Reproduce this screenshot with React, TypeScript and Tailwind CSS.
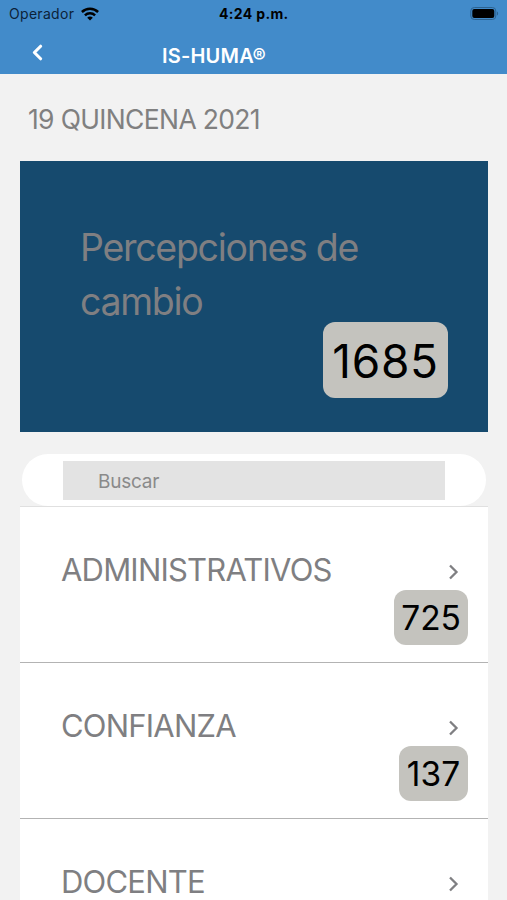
import { ChevronLeft } from "lucide-react";

type Group = { name: string; total?: number };

const groups: Group[] = [
  { name: "ADMINISTRATIVOS", total: 725 },
  { name: "CONFIANZA", total: 137 },
  { name: "DOCENTE" },
];

function StatusBar() {
  return (
    <div className="grid h-[27px] grid-cols-[210px_1fr_29px] items-center pl-[9px] pr-2 text-[14px] text-[#0c2238]">
      <div className="flex items-center gap-[7px]">
        <span className="tracking-[0.3px]">Operador</span>
        <svg width="18" height="14" viewBox="0 0 18 14" fill="none" stroke="#000" strokeWidth="2.5">
          <path d="M.9 5C5.400.7 12.600.7 17.100 5" />
          <path d="M3.900 8.300C6.700 5.700 11.300 5.700 14.100 8.300" />
          <path d="M9 13.500L6.200 10.700C7.700 9.200 10.300 9.200 11.800 10.700Z" fill="#000" stroke="none" />
        </svg>
      </div>
      <span className="font-bold tracking-[0.35px] text-black">4:24 p.m.</span>
      <svg width="29" height="13" viewBox="0 0 29 13">
        <rect x="0.800" y="0.500" width="25" height="12" rx="3.500" fill="none" stroke="#2c6290" />
        <rect x="2.300" y="2" width="22" height="9" rx="2" fill="#000" />
        <path d="M27 4.500C28.500 5 28.500 8 27 8.500Z" fill="#2c6290" />
      </svg>
    </div>
  );
}

export default function App() {
  return (
    <div className="h-[900px] w-full overflow-hidden bg-[#f2f2f2] font-[Inter,sans-serif] text-[#7f7f82]">
      <header className="h-[74px] bg-[#428bca]">
        <StatusBar />
        <div className="flex h-[47px] items-center pl-[25px] pt-[3px] text-white">
          <ChevronLeft size={25} strokeWidth={3} />
          <h1 className="ml-[112px] mt-2 text-[20px] font-semibold tracking-[0.2px]">IS-HUMA®</h1>
        </div>
      </header>

      <h2 className="flex h-[87px] items-center pl-7 pt-[5px] text-[26.5px] tracking-[-0.66px] text-[#808080]">
        19 QUINCENA 2021
      </h2>

      <main className="ml-5 w-[468px]">
        <section className="flex h-[271px] flex-col bg-[#164a6e] pl-[60px] pr-10 pt-[60px]">
          <p className="text-[37.5px] leading-[54px] tracking-[-1.3px]">Percepciones de cambio</p>
          <span className="-mt-[7px] flex h-[76px] w-[125px] items-center justify-center self-end rounded-xl bg-[#c4c3be] pt-[3px] text-[46px] tracking-[0.7px] text-black">
            1685
          </span>
        </section>

        {/* Search */}
        <div className="mx-[2px] mt-[22px] flex h-[52px] items-center rounded-full bg-white px-[41px]">
          <input
            className="h-[39px] w-full bg-[#e3e3e3] pl-[35px] pt-[2px] text-[19px] tracking-[-0.25px] outline-none placeholder:text-[#8a8a8a]"
            placeholder="Buscar"
          />
        </div>

        <ul>
          {groups.map((group) => (
            <li
              key={group.name}
              className="h-[156px] border-t border-[#b3b3b3] bg-white pl-[41px] pr-5 pt-[42px] first:border-[#e0e0e0]"
            >
              <div className="flex h-[41px] items-center justify-between">
                <span className="mt-[2px] text-[31px] tracking-[-0.8px]">{group.name}</span>
                <svg
                  className="mr-[9px] mt-1"
                  width="11"
                  height="16"
                  viewBox="0 0 11 16"
                  fill="none"
                  stroke="currentColor"
                  strokeWidth="2.300"
                >
                  <path d="M2 1.500L8.500 8L2 14.500" />
                </svg>
              </div>
              {group.total && (
                <div className="flex justify-end">
                  <span className="flex h-[55px] min-w-[69px] items-center justify-center rounded-xl bg-[#c4c3be] px-[7px] pt-px text-[33.5px] text-black">
                    {group.total}
                  </span>
                </div>
              )}
            </li>
          ))}
        </ul>
      </main>
    </div>
  );
}
